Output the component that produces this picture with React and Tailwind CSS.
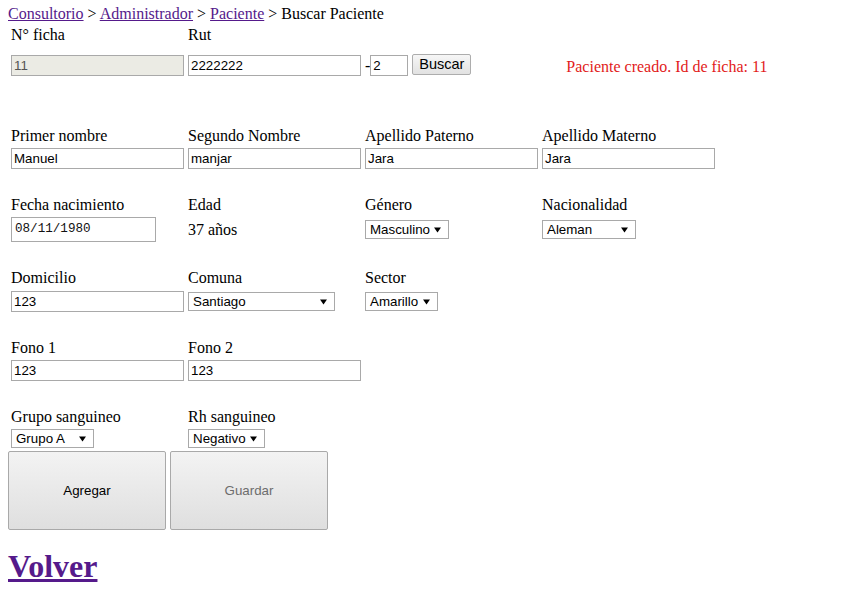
import React from "react";

function TInput({ value, className = "w-[173px]", disabled = false }) {
  return (
    <div
      className={
        "h-[21px] shrink-0 border border-[#a9a9a9] pl-[2px] flex items-center text-[13.33px] font-['Liberation_Sans',Arial,sans-serif] leading-none " +
        (disabled ? "bg-[#ebebe4] text-[#545454] " : "bg-white text-black ") +
        className
      }
    >
      {value}
    </div>
  );
}

function Sel({ value, className }) {
  return (
    <div
      className={
        "h-[19px] shrink-0 border border-[#a9a9a9] bg-white pl-[4px] pr-[7px] flex items-center justify-between text-[13.33px] font-['Liberation_Sans',Arial,sans-serif] leading-none text-black " +
        className
      }
    >
      <span>{value}</span>
      <svg width="7" height="6" viewBox="0 0 7 6" className="shrink-0">
        <polygon points="0,0.5 7,0.5 3.5,5.5" fill="#000" />
      </svg>
    </div>
  );
}

function Cell({ children, className = "" }) {
  return <div className={"w-[177px] shrink-0 " + className}>{children}</div>;
}

export default function App() {
  return (
    <div className="min-h-[599px] w-[867px] bg-white text-black font-['Liberation_Serif','Times_New_Roman',serif] text-[16px] leading-[18px]">
      <div className="pl-[8px] pt-[5px]">
        <a className="text-[#551a8b] underline" href="#">Consultorio</a>
        {" > "}
        <a className="text-[#551a8b] underline" href="#">Administrador</a>
        {" > "}
        <a className="text-[#551a8b] underline" href="#">Paciente</a>
        {" > Buscar Paciente"}
      </div>

      <div className="pl-[11px] mt-[3px] flex">
        <Cell>N° ficha</Cell>
        <Cell>Rut</Cell>
      </div>

      <div className="pl-[11px] mt-[11px] flex items-start">
        <Cell>
          <TInput value="11" disabled />
        </Cell>
        <TInput value="2222222" />
        <span className="ml-[4px] leading-[21px]">-</span>
        <TInput value="2" className="w-[38px]" />
        <button className="ml-[4px] mt-[-1px] h-[21px] w-[59px] border border-[#adadad] rounded-[2px] bg-gradient-to-b from-[#f6f6f6] to-[#e2e2e2] text-[14.5px] font-['Liberation_Sans',Arial,sans-serif] leading-none text-black">
          Buscar
        </button>
        <span className="ml-[95px] mt-[3px] text-[#e21a1a]">Paciente creado. Id de ficha: 11</span>
      </div>

      <div className="pl-[11px] mt-[51px] flex">
        <Cell>Primer nombre</Cell>
        <Cell>Segundo Nombre</Cell>
        <Cell>Apellido Paterno</Cell>
        <Cell>Apellido Materno</Cell>
      </div>
      <div className="pl-[11px] mt-[3px] flex">
        <Cell><TInput value="Manuel" /></Cell>
        <Cell><TInput value="manjar" /></Cell>
        <Cell><TInput value="Jara" /></Cell>
        <Cell><TInput value="Jara" /></Cell>
      </div>

      <div className="pl-[11px] mt-[27px] flex">
        <Cell>Fecha nacimiento</Cell>
        <Cell>Edad</Cell>
        <Cell>Género</Cell>
        <Cell>Nacionalidad</Cell>
      </div>
      <div className="pl-[11px] mt-[3px] flex items-center h-[25px]">
        <Cell>
          <div className="h-[25px] w-[145px] border border-[#a9a9a9] bg-white pl-[3px] flex items-center font-['Liberation_Mono','Courier_New',monospace] text-[12.6px] leading-none text-[#111]">
            08/11/1980
          </div>
        </Cell>
        <Cell>37 años</Cell>
        <Cell><Sel value="Masculino" className="w-[84px]" /></Cell>
        <Cell><Sel value="Aleman" className="w-[94px]" /></Cell>
      </div>

      <div className="pl-[11px] mt-[27px] flex">
        <Cell>Domicilio</Cell>
        <Cell>Comuna</Cell>
        <Cell>Sector</Cell>
      </div>
      <div className="pl-[11px] mt-[4px] flex items-center h-[21px]">
        <Cell><TInput value="123" /></Cell>
        <Cell><Sel value="Santiago" className="w-[147px]" /></Cell>
        <Cell><Sel value="Amarillo" className="w-[73px]" /></Cell>
      </div>

      <div className="pl-[11px] mt-[27px] flex">
        <Cell>Fono 1</Cell>
        <Cell>Fono 2</Cell>
      </div>
      <div className="pl-[11px] mt-[3px] flex">
        <Cell><TInput value="123" /></Cell>
        <Cell><TInput value="123" /></Cell>
      </div>

      <div className="pl-[11px] mt-[27px] flex">
        <Cell>Grupo sanguineo</Cell>
        <Cell>Rh sanguineo</Cell>
      </div>
      <div className="pl-[11px] mt-[3px] flex">
        <Cell><Sel value="Grupo A" className="w-[83px]" /></Cell>
        <Cell><Sel value="Negativo" className="w-[77px]" /></Cell>
      </div>

      <div className="pl-[8px] mt-[3px] flex gap-[4px]">
        <button className="h-[79px] w-[158px] border border-[#a9a9a9] rounded-[2px] bg-gradient-to-b from-[#f3f3f3] to-[#dfdfdf] text-[13.33px] font-['Liberation_Sans',Arial,sans-serif] text-black">
          Agregar
        </button>
        <button disabled className="h-[79px] w-[158px] border border-[#a9a9a9] rounded-[2px] bg-gradient-to-b from-[#f3f3f3] to-[#dfdfdf] text-[13.33px] font-['Liberation_Sans',Arial,sans-serif] text-[#6d6d6d]">
          Guardar
        </button>
      </div>

      <div className="pl-[8px] mt-[18px]">
        <a href="#" className="text-[32px] leading-[37px] font-bold text-[#551a8b] underline">Volver</a>
      </div>
    </div>
  );
}
